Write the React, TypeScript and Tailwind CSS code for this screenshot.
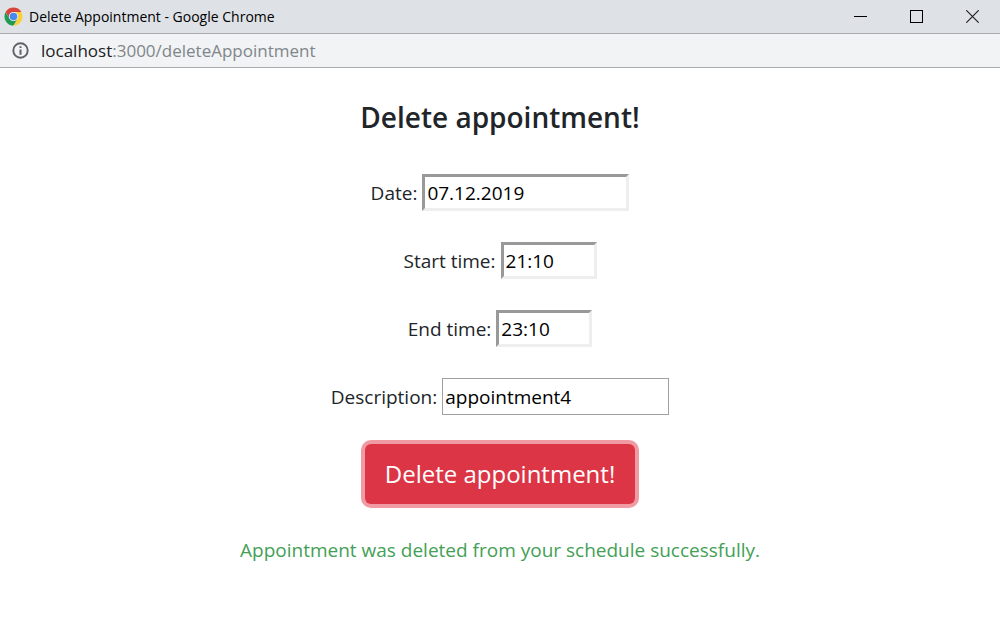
import { useState } from 'react';

function ChromeLogo() {
  return (
    <svg viewBox="0 0 48 48" className="size-[19px] shrink-0" aria-hidden="true">
      <circle cx="24" cy="24" r="23" fill="#f5f5f5" />
      <path d="M4.1 12.5A23 23 0 0 1 43.9 12.5H24A11.5 11.5 0 0 0 14 29.7Z" fill="#d9453a" />
      <path d="M43.9 12.5A23 23 0 0 1 24 47L34 29.7A11.5 11.5 0 0 0 24 12.5Z" fill="#fbcf3b" />
      <path d="M24 47A23 23 0 0 1 4.1 12.5L14 29.7A11.5 11.5 0 0 0 34 29.7Z" fill="#219a55" />
      <circle cx="24" cy="24" r="11" fill="#e4ecf8" />
      <circle cx="24" cy="24" r="9.5" fill="#4a89ec" />
    </svg>
  );
}

function TitleBar() {
  return (
    <header className="flex h-[34px] items-center justify-between border-b border-[#ababab] bg-[#dee1e6] pl-1">
      <div className="flex items-center gap-1.5">
        <ChromeLogo />
        <span className="text-sm text-black">Delete Appointment - Google Chrome</span>
      </div>
      <div className="flex">
        <button type="button" aria-label="Minimize" className="flex h-[33px] w-14 items-center justify-center">
          <svg viewBox="0 0 13 13" className="size-[13px]" fill="none" stroke="#000" shapeRendering="crispEdges">
            <path d="M0 6.5H13" />
          </svg>
        </button>
        <button type="button" aria-label="Maximize" className="flex h-[33px] w-14 items-center justify-center">
          <svg viewBox="0 0 13 13" className="size-[13px]" fill="none" stroke="#000" shapeRendering="crispEdges">
            <path d="M.5 .5H12.5V12.5H.5Z" />
          </svg>
        </button>
        <button type="button" aria-label="Close" className="flex h-[33px] w-14 items-center justify-center">
          <svg viewBox="0 0 13 13" className="size-[13px]" fill="none" stroke="#222" strokeWidth="1.2">
            <path d="M.3 .3L12.7 12.7M12.7 .3L.3 12.7" />
          </svg>
        </button>
      </div>
    </header>
  );
}

function AddressBar() {
  return (
    <div className="flex h-[34px] items-center gap-3 border-b border-[#ababab] bg-[#f1f3f4] pl-3 text-[17px]">
      <svg viewBox="0 0 17 17" className="size-[17px] shrink-0" fill="none" aria-hidden="true">
        <circle cx="8.5" cy="8.5" r="7.2" stroke="#5f6368" strokeWidth="1.9" />
        <path d="M8.5 4.3V6.1M8.5 7.4V12.7" stroke="#5f6368" strokeWidth="2" />
      </svg>
      <span className="text-[#80868b]">
        <span className="text-[#202124]">localhost</span>:3000/deleteAppointment
      </span>
    </div>
  );
}

type FieldProps = {
  id: string;
  label: string;
  value: string;
  onChange: (value: string) => void;
  boxClass: string;
};

const insetBox = 'border-[3px] border-t-[#999] border-l-[#999] border-r-[#eee] border-b-[#eee]';

function Field({ id, label, value, onChange, boxClass }: FieldProps) {
  return (
    <div className="flex items-center justify-center gap-[5px]">
      <label htmlFor={id}>{label}</label>
      <input
        id={id}
        type="text"
        value={value}
        onChange={(e) => onChange(e.target.value)}
        className={`h-[37px] bg-white px-0.5 text-black outline-none ${boxClass}`}
      />
    </div>
  );
}

export default function App() {
  const [date, setDate] = useState('07.12.2019');
  const [start, setStart] = useState('21:10');
  const [end, setEnd] = useState('23:10');
  const [description, setDescription] = useState('appointment4');

  return (
    <div className="min-h-screen bg-white font-['Open_Sans',sans-serif] text-[#212529]">
      <TitleBar />
      <AddressBar />
      <main className="px-4 pt-[31px] pb-16 text-center text-[19px] leading-7">
        <h1 className="text-[28px] leading-9 font-semibold">Delete appointment!</h1>
        <form className="mt-[39px]" onSubmit={(e) => e.preventDefault()}>
          <div className="flex flex-col gap-[31px]">
            <Field id="date" label="Date:" value={date} onChange={setDate} boxClass={`w-[207px] ${insetBox}`} />
            <Field id="start" label="Start time:" value={start} onChange={setStart} boxClass={`w-24 ${insetBox}`} />
            <Field id="end" label="End time:" value={end} onChange={setEnd} boxClass={`w-24 ${insetBox}`} />
            <Field
              id="description"
              label="Description:"
              value={description}
              onChange={setDescription}
              boxClass="w-[227px] border border-[#a0a0a0]"
            />
          </div>
          <button
            type="submit"
            className="mt-[29px] h-[60px] rounded-md bg-[#dc3545] px-5 text-2xl text-white ring-4 ring-[#f09ba4]"
          >
            Delete appointment!
          </button>
        </form>
        <p role="status" className="mt-8 text-[#43a056]">
          Appointment was deleted from your schedule successfully.
        </p>
      </main>
    </div>
  );
}
